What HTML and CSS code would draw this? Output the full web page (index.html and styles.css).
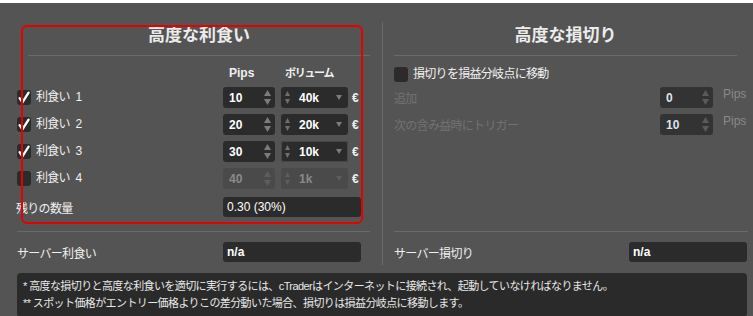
FILE: index.html
```html
<!DOCTYPE html>
<html lang="ja">
<head>
    <meta charset="UTF-8">
    <title>高度な利食い / 高度な損切り</title>
    <link rel="stylesheet" href="styles.css">
</head>
<body>
    <div class="window">
        <div class="panels">
            <!-- take profit -->
            <section class="panel">
                <h2 class="panel-title title-left">高度な利食い</h2>

                <div class="tp-grid">
                    <div></div>
                    <div class="col-head">Pips</div>
                    <div class="col-head vol-head">ボリューム</div>
                    <div></div>

                    <label class="check-label">
                        <span class="checkbox checked"><svg viewBox="0 0 14 15"><path d="M2.6 8.2 L5.4 12.4 L11.6 2.6"/></svg></span>
                        利食い 1
                    </label>
                    <div class="field"><span class="val">10</span><svg class="spin" viewBox="0 0 7 15"><polygon points="0,6 3.5,0 7,6"/><polygon points="0,9 3.5,15 7,9"/></svg></div>
                    <div class="field vol"><svg class="spin-sm" viewBox="0 0 5 13"><polygon points="0,5 2.5,0 5,5"/><polygon points="0,8 2.5,13 5,8"/></svg><span class="val">40k</span><svg class="drop" viewBox="0 0 6 5"><polygon points="0,0 6,0 3,5"/></svg></div>
                    <div class="cur">€</div>

                    <label class="check-label">
                        <span class="checkbox checked"><svg viewBox="0 0 14 15"><path d="M2.6 8.2 L5.4 12.4 L11.6 2.6"/></svg></span>
                        利食い 2
                    </label>
                    <div class="field"><span class="val">20</span><svg class="spin" viewBox="0 0 7 15"><polygon points="0,6 3.5,0 7,6"/><polygon points="0,9 3.5,15 7,9"/></svg></div>
                    <div class="field vol"><svg class="spin-sm" viewBox="0 0 5 13"><polygon points="0,5 2.5,0 5,5"/><polygon points="0,8 2.5,13 5,8"/></svg><span class="val">20k</span><svg class="drop" viewBox="0 0 6 5"><polygon points="0,0 6,0 3,5"/></svg></div>
                    <div class="cur">€</div>

                    <label class="check-label">
                        <span class="checkbox checked"><svg viewBox="0 0 14 15"><path d="M2.6 8.2 L5.4 12.4 L11.6 2.6"/></svg></span>
                        利食い 3
                    </label>
                    <div class="field"><span class="val">30</span><svg class="spin" viewBox="0 0 7 15"><polygon points="0,6 3.5,0 7,6"/><polygon points="0,9 3.5,15 7,9"/></svg></div>
                    <div class="field vol focused"><svg class="spin-sm" viewBox="0 0 5 13"><polygon points="0,5 2.5,0 5,5"/><polygon points="0,8 2.5,13 5,8"/></svg><span class="val">10k</span><svg class="drop" viewBox="0 0 6 5"><polygon points="0,0 6,0 3,5"/></svg></div>
                    <div class="cur">€</div>

                    <label class="check-label">
                        <span class="checkbox"></span>
                        利食い 4
                    </label>
                    <div class="field disabled"><span class="val">40</span><svg class="spin" viewBox="0 0 7 15"><polygon points="0,6 3.5,0 7,6"/><polygon points="0,9 3.5,15 7,9"/></svg></div>
                    <div class="field vol disabled"><svg class="spin-sm" viewBox="0 0 5 13"><polygon points="0,5 2.5,0 5,5"/><polygon points="0,8 2.5,13 5,8"/></svg><span class="val">1k</span><svg class="drop" viewBox="0 0 6 5"><polygon points="0,0 6,0 3,5"/></svg></div>
                    <div class="cur">€</div>

                    <div class="rest-label">残りの数量</div>
                    <div class="field wide rest-field"><span class="val">0.30 (30%)</span></div>
                </div>

                <div class="server-block">
                    <div class="server-row server-left">
                        <span>サーバー利食い</span>
                        <div class="field"><span class="val">n/a</span></div>
                    </div>
                </div>
            </section>

            <div class="divider"></div>

            <!-- stop loss -->
            <section class="panel">
                <h2 class="panel-title title-right">高度な損切り</h2>

                <label class="check-label be-row">
                    <span class="checkbox"></span>
                    損切りを損益分岐点に移動
                </label>

                <div class="sl-row first">
                    <span class="muted">追加</span>
                    <div class="field soft"><span class="val">0</span><svg class="spin" viewBox="0 0 7 15"><polygon points="0,6 3.5,0 7,6"/><polygon points="0,9 3.5,15 7,9"/></svg></div>
                    <span class="unit">Pips</span>
                </div>
                <div class="sl-row">
                    <span class="muted">次の含み益時にトリガー</span>
                    <div class="field soft"><span class="val">10</span><svg class="spin" viewBox="0 0 7 15"><polygon points="0,6 3.5,0 7,6"/><polygon points="0,9 3.5,15 7,9"/></svg></div>
                    <span class="unit">Pips</span>
                </div>

                <div class="server-block">
                    <div class="server-row server-right">
                        <span>サーバー損切り</span>
                        <div class="field"><span class="val">n/a</span></div>
                    </div>
                </div>
            </section>
        </div>

        <div class="note">
            <p>* 高度な損切りと高度な利食いを適切に実行するには、cTraderはインターネットに接続され、起動していなければなりません。</p>
            <p>** スポット価格がエントリー価格よりこの差分動いた場合、損切りは損益分岐点に移動します。</p>
        </div>

        <div class="highlight"></div>
    </div>
</body>
</html>
```

FILE: styles.css
```css
:root {
    --bg: #545454;
    --field: #2b2b2b;
    --line: #6a6a6a;
    --text: #f0f0f0;
    --muted: #727272;
}

* {
    box-sizing: border-box;
}

body {
    margin: 0;
    background: #fff;
    font-family: "Liberation Sans", "Noto Sans CJK JP", sans-serif;
    font-size: 12px;
    letter-spacing: -0.7px;
    color: var(--text);
}

.window {
    position: relative;
    margin-top: 3px;
    height: 313px;
    background: var(--bg);
    padding-top: 19px;
    overflow: hidden;
}

.panels {
    display: grid;
    grid-template-columns: 353px 24px 354px;
    padding-left: 17px;
}

.divider {
    background: var(--line);
    margin-left: 12px;
    width: 1px;
}

.panel {
    display: flex;
    flex-direction: column;
    height: 243px;
}

.panel-title {
    margin: 0;
    font-size: 17px;
    font-weight: bold;
    letter-spacing: 0;
    line-height: 28px;
    text-align: center;
    padding-bottom: 5px;
    border-bottom: 1px solid var(--line);
    color: #ececec;
}

.title-left {
    margin-left: 11px;
}

.title-right {
    margin-right: 11px;
}

/* take profit grid */
.tp-grid {
    display: grid;
    grid-template-columns: 200px 52px 67px 7px;
    grid-template-rows: 15px repeat(4, 21px) 20px;
    column-gap: 6px;
    row-gap: 6px;
    margin-top: 10px;
    align-items: center;
}

.col-head {
    padding-left: 6px;
    font-weight: bold;
    letter-spacing: 0;
    line-height: 15px;
}

.vol-head {
    padding-left: 4px;
    font-size: 11px;
    letter-spacing: -1.3px;
}

.check-label {
    display: flex;
    align-items: center;
    gap: 5px;
    line-height: 15px;
    word-spacing: 3px;
}

.checkbox {
    width: 14px;
    height: 15px;
    border-radius: 3px;
    background: var(--field);
    flex: none;
}

.checkbox svg {
    display: block;
    width: 14px;
    height: 15px;
    fill: none;
    stroke: #fff;
    stroke-width: 2.3;
    stroke-linecap: round;
    stroke-linejoin: round;
}

.field {
    display: flex;
    align-items: center;
    height: 100%;
    background: var(--field);
    border-radius: 3px;
    padding: 0 4px 0 6px;
    font-weight: bold;
    letter-spacing: 0;
    color: #fff;
}

.field .val {
    flex: 1;
}

.spin {
    width: 7px;
    height: 15px;
    fill: #7c7c7c;
}

.vol {
    padding-left: 4px;
}

.vol .val {
    padding-left: 9px;
}

.spin-sm {
    width: 5px;
    height: 13px;
    fill: #6f6f6f;
}

.drop {
    width: 6px;
    height: 5px;
    fill: #7c7c7c;
    margin-right: 2px;
}

.focused {
    box-shadow: inset 0 0 0 1px #474747;
}

.field.disabled {
    background: #4a4a4a;
    color: #8a8a8a;
}

.field.disabled svg {
    fill: #5e5e5e;
}

.cur {
    font-weight: bold;
    margin-left: -2px;
}

.rest-label {
    margin-top: 4px;
    margin-left: -1px;
    line-height: 20px;
    align-self: stretch;
}

.rest-field {
    grid-column: 2 / 5;
    margin-top: 4px;
    height: 20px;
    font-weight: normal;
    padding-left: 4px;
}

/* server rows */
.server-block {
    margin-top: auto;
    border-top: 1px solid var(--line);
    padding: 10px 0 3px;
}

.server-row {
    display: grid;
    align-items: center;
    height: 20px;
}

.server-left {
    grid-template-columns: 206px 138px;
}

.server-right {
    grid-template-columns: 235px 118px;
}

.server-row .field {
    padding-left: 4px;
}

/* stop loss */
.be-row {
    margin-top: 11px;
    height: 15px;
}

.sl-row {
    display: grid;
    grid-template-columns: 1fr 53px 25px;
    column-gap: 10px;
    height: 21px;
    margin-top: 6px;
    align-items: center;
}

.sl-row.first {
    margin-top: 5px;
}

.muted {
    color: var(--muted);
}

.field.soft {
    background: #333;
    color: #dde3ee;
}

.field.soft svg {
    fill: #5a5a5a;
}

.unit {
    align-self: start;
    line-height: 14px;
    letter-spacing: 0;
    color: #8a8a8a;
}

/* note */
.note {
    margin: 8px 0 0 17px;
    width: 730px;
    background: #2a2a2a;
    border-radius: 4px;
    padding: 5px 6px;
    font-size: 11px;
    letter-spacing: -0.6px;
    line-height: 17px;
    color: #e8e8e8;
}

.note p {
    margin: 0;
}

/* annotation frame drawn over the dialog */
.highlight {
    position: absolute;
    left: 21px;
    top: 22px;
    width: 342px;
    height: 199px;
    border: 2px solid #e60000;
    border-radius: 6px;
}
```
